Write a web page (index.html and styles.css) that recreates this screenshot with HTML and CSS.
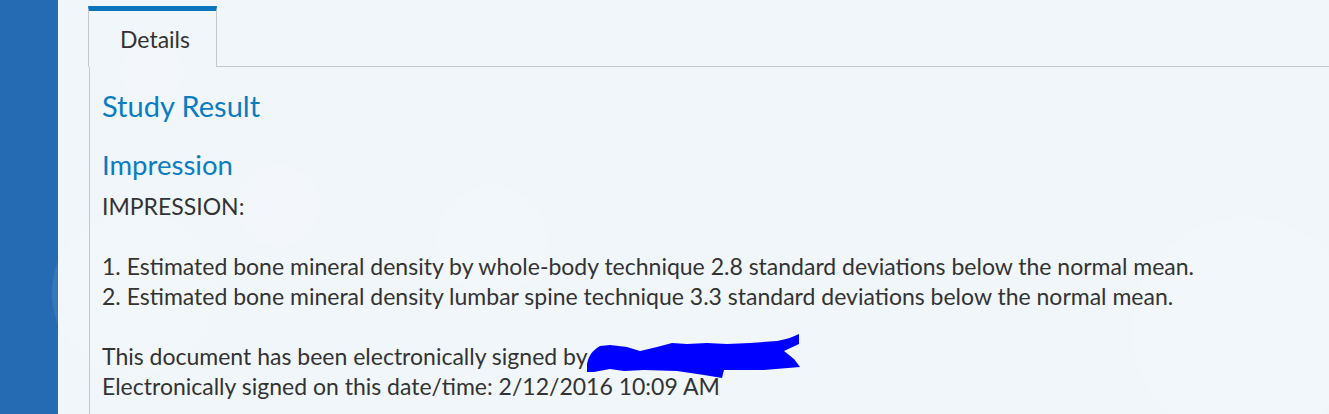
FILE: index.html
```html
<!DOCTYPE html>
<html>
<head>
<meta charset="utf-8">
<link rel="stylesheet" href="styles.css">
</head>
<body>
<div class="page">
  <aside class="sidebar"></aside>
  <div class="bokeh"></div>
  <main class="main">
    <div class="tabs">
      <div class="tab active">Details</div>
      <div class="tab-rest"></div>
    </div>
    <section class="panel">
      <h2 class="title">Study Result</h2>
      <h3 class="subtitle">Impression</h3>
      <div class="body">
        <p>IMPRESSION:</p>
        <p class="blank">&nbsp;</p>
        <p>1. Estimated bone mineral density by whole-body technique 2.8 standard deviations below the normal mean.</p>
        <p>2. Estimated bone mineral density lumbar spine technique 3.3 standard deviations below the normal mean.</p>
        <p class="blank">&nbsp;</p>
        <p>This document has been electronically signed by<span class="redact-anchor"><svg class="redact" width="230" height="52" viewBox="0 0 230 52"><path d="M10 35 C12 26 15 22 23 17 L33 16 L50 18 L63 22 L80 18 L95 14 L110 15 L130 14 L150 15 L173 14 L200 12 C210 10 216 8 222 5 L222 15 L207 22 L217 30 L223 38 L187 41 L147 41 L145 49 L127 46 L100 42 L67 41 L47 42 L33 40 L17 43 L10 43 Z" fill="#0000ff"/></svg></span></p>
        <p>Electronically signed on this date/time: 2/12/2016 10:09 AM</p>
      </div>
    </section>
  </main>
</div>
</body>
</html>
```
FILE: styles.css
```css
html, body {
  margin: 0;
  padding: 0;
  height: 100%;
  overflow: hidden;
}
body {
  background: #f1f6fa;
  font-family: "Lato", "Open Sans", sans-serif;
  color: #333333;
}
.page {
  position: relative;
  display: flex;
  height: 414px;
  overflow: hidden;
}
.sidebar {
  width: 58px;
  flex: none;
  background: #246bb3;
}
.main {
  position: relative;
  z-index: 1;
  flex: 1;
  display: flex;
  flex-direction: column;
  padding: 6px 0 0 30px;
}
.tabs {
  display: flex;
  height: 61px;
}
.tab {
  border-top: 5px solid #0b74bd;
  border-left: 1px solid #c8c8c8;
  border-right: 1px solid #c8c8c8;
  box-sizing: border-box;
  width: 129px;
  padding: 14px 0 0 31px;
  font-size: 23px;
  line-height: 28px;
  color: #333;
}
.tab-rest {
  flex: 1;
  border-bottom: 1px solid #c8c8c8;
}
.panel {
  flex: 1;
  margin-left: 1px;
  border-left: 1px solid #c8c8c8;
  padding: 21px 0 0 12px;
}
.title {
  margin: 0;
  font-weight: 400;
  font-size: 29px;
  line-height: 36px;
  color: #0a7cc1;
}
.subtitle {
  margin: 24px 0 0;
  font-weight: 400;
  font-size: 27.5px;
  line-height: 34px;
  color: #0a7cc1;
}
.body {
  margin-top: 9px;
  font-size: 23px;
  line-height: 30px;
}
.body p {
  margin: 0;
  white-space: nowrap;
}
.redact-anchor {
  position: relative;
  display: inline-block;
  width: 0;
}
.redact {
  position: absolute;
  left: -11px;
  top: -36px;
}
.bokeh {
  position: absolute;
  inset: 0;
  z-index: 0;
  pointer-events: none;
  background:
    radial-gradient(circle at 135px 293px, rgba(255,255,255,0.09) 82px, rgba(255,255,255,0) 84px),
    radial-gradient(circle at 279px 206px, rgba(255,255,255,0.16) 40px, rgba(255,255,255,0) 42px),
    radial-gradient(circle at 492px 240px, rgba(255,255,255,0.13) 54px, rgba(255,255,255,0) 56px),
    radial-gradient(circle at 152px 73px, rgba(255,255,255,0.16) 30px, rgba(255,255,255,0) 32px),
    radial-gradient(circle at 1245px 330px, rgba(255,255,255,0.13) 112px, rgba(255,255,255,0) 114px);
}
```
